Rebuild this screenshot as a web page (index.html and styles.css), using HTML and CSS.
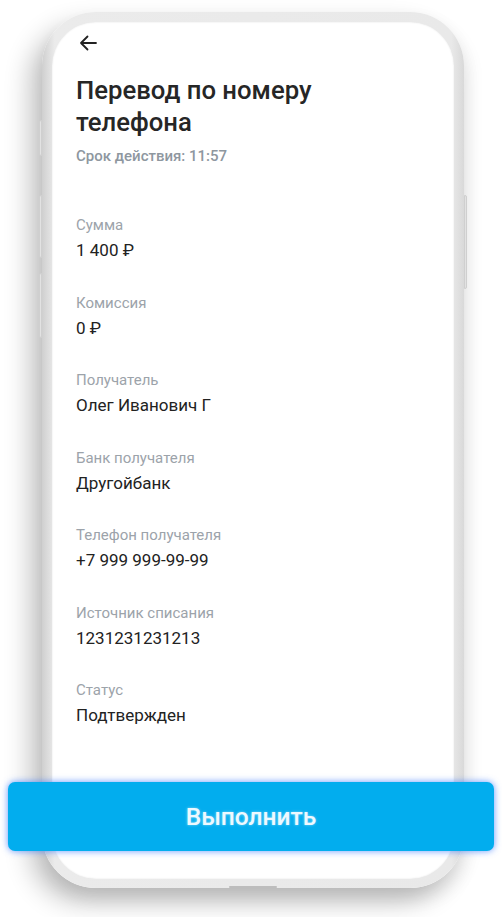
FILE: index.html
```html
<!DOCTYPE html>
<html lang="ru">
<head>
    <meta charset="UTF-8">
    <meta name="viewport" content="width=device-width, initial-scale=1.0">
    <title>Перевод по номеру телефона</title>
    <link rel="stylesheet" href="styles.css">
</head>
<body>
    <div class="stage">
        <div class="phone">
            <span class="side-btn side-btn-1"></span>
            <span class="side-btn side-btn-2"></span>
            <span class="side-btn side-btn-3"></span>
            <span class="side-btn side-btn-right"></span>
            <span class="notch"></span>
            <div class="screen">
                <div class="topbar">
                    <svg class="back" width="20" height="20" viewBox="0 0 20 20">
                        <path d="M18 10H3M9.5 3.5L3 10l6.5 6.5" fill="none" stroke="#222" stroke-width="1.8" stroke-linecap="round" stroke-linejoin="round"/>
                    </svg>
                </div>
                <h1 class="title">Перевод по номеру телефона</h1>
                <div class="expire">Срок действия: 11:57</div>

                <div class="details">
                    <div class="item">
                        <div class="label">Сумма</div>
                        <div class="value">1 400 ₽</div>
                    </div>
                    <div class="item">
                        <div class="label">Комиссия</div>
                        <div class="value">0 ₽</div>
                    </div>
                    <div class="item">
                        <div class="label">Получатель</div>
                        <div class="value">Олег Иванович Г</div>
                    </div>
                    <div class="item">
                        <div class="label">Банк получателя</div>
                        <div class="value">Другойбанк</div>
                    </div>
                    <div class="item">
                        <div class="label">Телефон получателя</div>
                        <div class="value">+7 999 999-99-99</div>
                    </div>
                    <div class="item">
                        <div class="label">Источник списания</div>
                        <div class="value">1231231231213</div>
                    </div>
                    <div class="item">
                        <div class="label">Статус</div>
                        <div class="value">Подтвержден</div>
                    </div>
                </div>
            </div>
        </div>
        <button class="submit">Выполнить</button>
    </div>
</body>
</html>
```

FILE: styles.css
```css
body {
    margin: 0;
    background-color: #fff;
    font-family: Roboto, "Noto Sans", Arial, sans-serif;
    overflow: hidden;
}

.stage {
    position: relative;
    width: 502px;
    height: 917px;
    padding-top: 12px;
    box-sizing: border-box;
}

.phone {
    position: relative;
    margin-left: 42px;
    width: 422px;
    height: 876px;
    padding: 10px 10px 9px 10px;
    box-sizing: border-box;
    border-radius: 54px;
    background: linear-gradient(90deg, #cfcfcf 0%, #ebebeb 3%, #e9e9e9 97%, #d9d9d9 100%);
    box-shadow: -12px 14px 26px rgba(0, 0, 0, 0.24), 4px 10px 18px rgba(0, 0, 0, 0.08);
}

.screen {
    height: 100%;
    background-color: #fff;
    border-radius: 44px;
    padding: 9px 24px 0 24px;
    box-sizing: border-box;
    box-shadow: inset 0 0 2px rgba(0, 0, 0, 0.12);
}

.side-btn {
    position: absolute;
    left: -3px;
    width: 3px;
    background-color: #e2e2e2;
    border: 1px solid #cfcfcf;
    border-radius: 2px 0 0 2px;
    box-sizing: border-box;
}

.side-btn-1 { top: 108px; height: 36px; }
.side-btn-2 { top: 183px; height: 63px; }
.side-btn-3 { top: 261px; height: 65px; }

.side-btn-right {
    position: absolute;
    right: -3px;
    left: auto;
    top: 183px;
    height: 94px;
    width: 3px;
    border-radius: 0 2px 2px 0;
}

.notch {
    position: absolute;
    left: 187px;
    bottom: 0;
    width: 48px;
    height: 2px;
    background-color: #bdbdbd;
    border-radius: 1px;
}

.topbar {
    height: 24px;
    display: flex;
    align-items: center;
    padding-left: 2px;
}

.title {
    margin: 19px 0 0 0;
    font-size: 25.7px;
    line-height: 32px;
    font-weight: 500;
    color: #262626;
    width: 260px;
}

.expire {
    margin-top: 8px;
    font-size: 15px;
    line-height: 20px;
    font-weight: 500;
    color: #8e979f;
}

.details {
    margin-top: 49px;
    display: flex;
    flex-direction: column;
    gap: 30.5px;
}

.label {
    font-size: 15px;
    line-height: 20px;
    color: #9ca3aa;
}

.value {
    margin-top: 3px;
    font-size: 17px;
    line-height: 24px;
    color: #222;
}

.submit {
    position: absolute;
    left: 8px;
    top: 782px;
    width: 486px;
    height: 69px;
    border: none;
    border-radius: 7px;
    background-color: #02adee;
    box-shadow: 0 0 7px rgba(40, 110, 255, 0.7);
    color: #eef9ff;
    font-family: Roboto, "Noto Sans", Arial, sans-serif;
    font-size: 24.5px;
    font-weight: 500;
    text-shadow: 0 0 3px rgba(255, 255, 255, 0.5);
    cursor: pointer;
}
```
